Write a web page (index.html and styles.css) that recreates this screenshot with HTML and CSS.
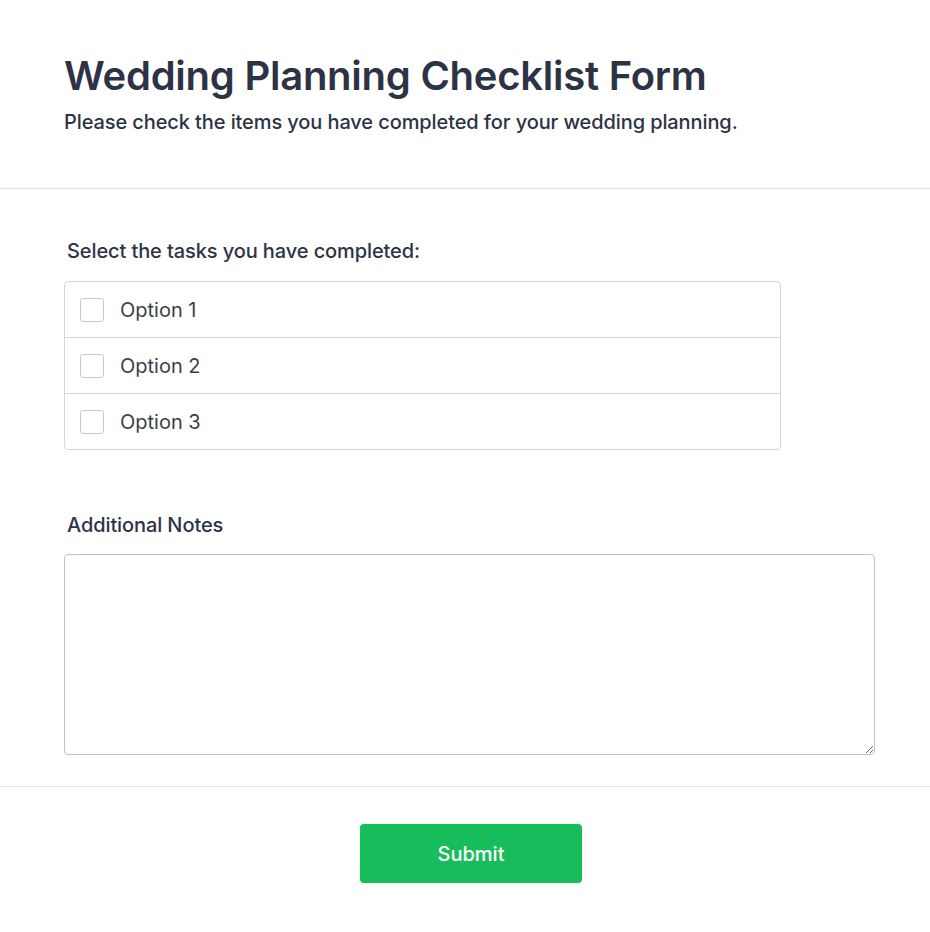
FILE: index.html
```html
<!DOCTYPE html>
<html lang="en">
<head>
  <meta charset="UTF-8">
  <title>Wedding Planning Checklist Form</title>
  <link rel="stylesheet" href="styles.css">
</head>
<body>

<div class="header">
  <h1>Wedding Planning Checklist Form</h1>
  <p>Please check the items you have completed for your wedding planning.</p>
</div>

<form class="form-body">
  <div class="field">
    <label class="field-label">Select the tasks you have completed:</label>
    <div class="options">
      <label class="option"><span class="box"></span> Option 1</label>
      <label class="option"><span class="box"></span> Option 2</label>
      <label class="option"><span class="box"></span> Option 3</label>
    </div>
  </div>

  <div class="field notes">
    <label class="field-label" for="notes">Additional Notes</label>
    <textarea id="notes"></textarea>
  </div>
</form>

<div class="footer">
  <button type="button">Submit</button>
</div>

</body>
</html>
```

FILE: styles.css
```css
body {
  margin: 0;
  font-family: Inter, "Noto Sans", sans-serif;
  background: #fff;
  color: #2c3345;
}
.header {
  padding: 52px 64px 52px;
  border-bottom: 1px solid #dfe1e8;
}
.header h1 {
  margin: 0;
  font-size: 40px;
  font-weight: 600;
  line-height: 48px;
  letter-spacing: -0.25px;
}
.header p {
  margin: 8px 0 0;
  font-size: 20px;
  font-weight: 500;
  line-height: 28px;
  letter-spacing: -0.1px;
}
.form-body {
  padding: 50px 55px 31px 64px;
  border-bottom: 1px solid #e4e6ec;
}
.field-label {
  display: block;
  padding-left: 3px;
  font-size: 20px;
  font-weight: 500;
  line-height: 24px;
  letter-spacing: -0.1px;
  margin-bottom: 18px;
}
.options {
  width: 715px;
  border: 1px solid #d3d6de;
  border-radius: 4px;
}
.option {
  display: flex;
  align-items: center;
  height: 55px;
  padding-left: 15px;
  font-size: 20px;
  color: #3e3e4b;
  border-bottom: 1px solid #d3d6de;
}
.option:last-child {
  border-bottom: none;
}
.box {
  width: 22px;
  height: 22px;
  border: 1px solid #c4c9d6;
  border-radius: 3px;
  margin-right: 16px;
}
.notes {
  margin-top: 63px;
}
.notes .field-label {
  margin-bottom: 17px;
}
textarea {
  display: block;
  width: 100%;
  height: 201px;
  box-sizing: border-box;
  border: 1px solid #bcc0d3;
  border-radius: 4px;
}
.footer {
  display: flex;
  justify-content: center;
  padding: 37px 0 49px 12px;
}
button {
  width: 222px;
  height: 59px;
  background: #18bd5b;
  color: #fff;
  border: none;
  border-radius: 4px;
  font-family: Inter, sans-serif;
  font-size: 20px;
  font-weight: 500;
}
```
